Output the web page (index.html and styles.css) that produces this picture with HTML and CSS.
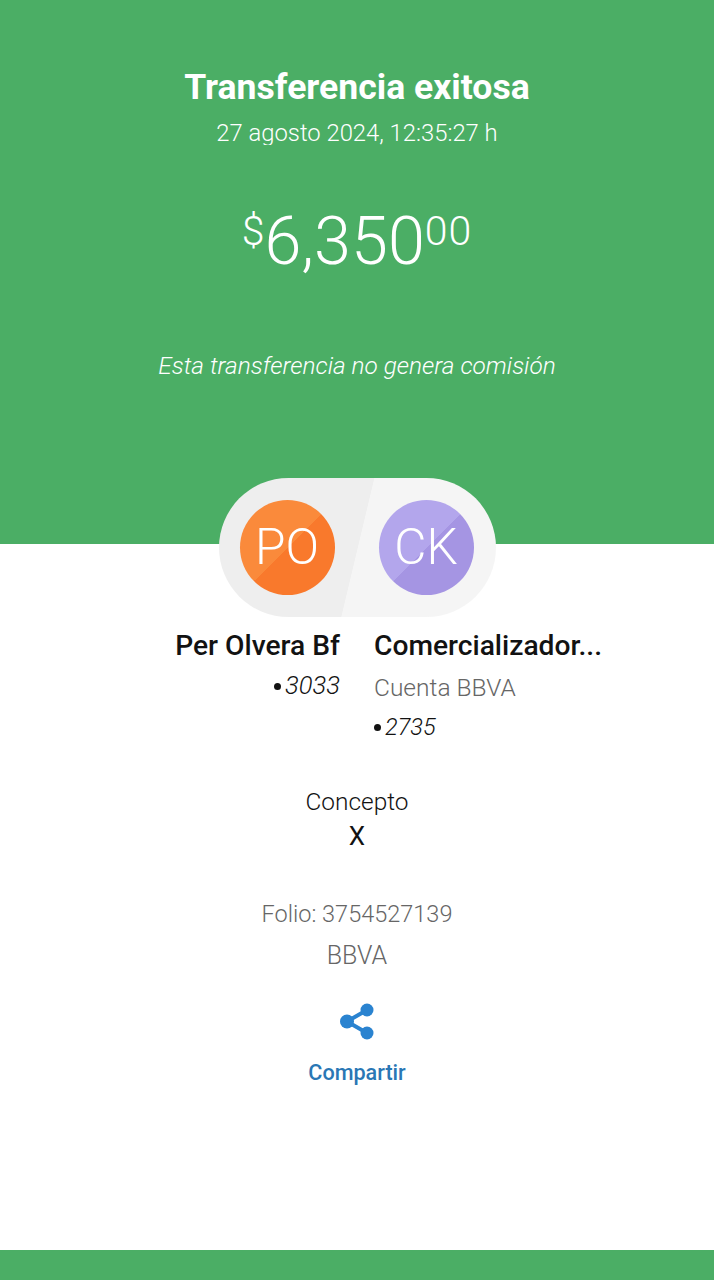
FILE: index.html
```html
<!DOCTYPE html>
<html lang="es">

    <head>
        <meta charset="UTF-8">
        <meta name="viewport" content="width=device-width, initial-scale=1.0">
        <title>Transferencia exitosa</title>

        <link rel="stylesheet" href="styles.css">
    </head>

    <body>
        <header class="hero">
            <h1 class="hero-title">Transferencia exitosa</h1>
            <p class="hero-date">27 agosto 2024, 12:35:27 h</p>
            <p class="amount"><span class="amount-sup">$</span>6,350<span class="amount-sup amount-cents">00</span></p>
            <p class="hero-note">Esta transferencia no genera comisión</p>
        </header>

        <main class="detail">
            <div class="pill">
                <div class="avatar avatar-orange">PO</div>
                <div class="avatar avatar-purple">CK</div>
            </div>

            <div class="parties">
                <div class="party party-from">
                    <div class="party-name">Per Olvera Bf</div>
                    <div class="party-account party-account-wide"><span class="dot"></span>3033</div>
                </div>
                <div class="party party-to">
                    <div class="party-name">Comercializador...</div>
                    <div class="party-bank">Cuenta BBVA</div>
                    <div class="party-account"><span class="dot"></span>2735</div>
                </div>
            </div>

            <div class="concept">
                <div class="concept-label">Concepto</div>
                <div class="concept-value">X</div>
            </div>

            <div class="folio">
                <div>Folio: 3754527139</div>
                <div class="folio-bank">BBVA</div>
            </div>

            <a class="share" href="#">
                <svg class="share-icon" width="36" height="38" viewBox="0 0 36 38">
                    <path d="M28 7 L8 18.5 L28 30" fill="none" stroke="#2a83d0" stroke-width="4" />
                    <circle cx="28" cy="7" r="6.5" fill="#2a83d0" />
                    <circle cx="8" cy="18.5" r="7" fill="#2a83d0" />
                    <circle cx="28" cy="30" r="6.5" fill="#2a83d0" />
                </svg>
                <span class="share-label">Compartir</span>
            </a>
        </main>

        <footer class="bottom-bar"></footer>
    </body>

</html>
```

FILE: styles.css
```css
* {
    box-sizing: border-box;
}

body {
    margin: 0;
    height: 1280px;
    display: flex;
    flex-direction: column;
    font-family: Roboto, "Liberation Sans", sans-serif;
    background-color: #fff;
    overflow: hidden;
}

p,
h1 {
    margin: 0;
}

.hero {
    height: 544px;
    flex: none;
    padding-top: 67px;
    background-color: #4bae65;
    color: #fff;
    text-align: center;
}

.hero-title {
    font-size: 35.6px;
    line-height: 40px;
    font-weight: 700;
}

/* the row is shorter than the text, descenders get cut */
.hero-date {
    margin-top: 11px;
    height: 27px;
    overflow: hidden;
    font-size: 23.8px;
    line-height: 30px;
    font-weight: 300;
}

.amount {
    margin-top: 56px;
    font-size: 66.5px;
    line-height: 80px;
    font-weight: 300;
}

.amount-sup {
    font-size: 41px;
    line-height: 0;
    vertical-align: 19px;
}

.amount-cents {
    letter-spacing: 1px;
}

.hero-note {
    margin-top: 70px;
    font-size: 24.4px;
    line-height: 30px;
    font-weight: 300;
    font-style: italic;
}

.detail {
    flex: 1;
    display: flex;
    flex-direction: column;
    align-items: center;
}

/* sits half over the green header */
.pill {
    width: 277px;
    height: 139px;
    margin-top: -66px;
    padding: 0 22px 0 21px;
    display: flex;
    align-items: center;
    justify-content: space-between;
    border-radius: 70px;
    background: linear-gradient(103.4deg, #eeeeee 50%, #f5f5f5 50.2%);
}

.avatar {
    width: 95px;
    height: 95px;
    padding-bottom: 2px;
    border-radius: 50%;
    display: flex;
    align-items: center;
    justify-content: center;
    color: #fff;
    font-size: 49.5px;
    font-weight: 300;
}

.avatar-orange {
    background: linear-gradient(135deg, #fa8a3b 50%, #f9792c 50%);
}

.avatar-purple {
    background: linear-gradient(135deg, #b3a6ec 50%, #a595e3 50%);
}

.parties {
    width: 100%;
    margin-top: 12px;
    display: flex;
    gap: 34px;
}

.party {
    flex: none;
}

.party-from {
    width: 340px;
    text-align: right;
}

.party-name {
    font-size: 28.2px;
    line-height: 33px;
    font-weight: 500;
    color: #121212;
}

.party-bank {
    margin-top: 9px;
    font-size: 24.5px;
    line-height: 34px;
    font-weight: 300;
    color: #666;
}

.party-account {
    margin-top: 6px;
    font-size: 23.5px;
    line-height: 34px;
    font-weight: 300;
    font-style: italic;
    color: #121212;
}

.party-account-wide {
    font-size: 25.5px;
}

.party-to .party-account {
    margin-top: 5px;
}

.dot {
    display: inline-block;
    width: 7px;
    height: 7px;
    margin-right: 4px;
    border-radius: 50%;
    background-color: #121212;
    vertical-align: 4px;
}

.concept {
    margin-top: 41px;
    text-align: center;
    color: #121212;
}

.concept-label {
    font-size: 24.4px;
    line-height: 34px;
    font-weight: 300;
}

.concept-value {
    font-size: 26px;
    line-height: 34px;
}

.folio {
    margin-top: 44px;
    display: flex;
    flex-direction: column;
    gap: 8px;
    text-align: center;
    font-size: 23.5px;
    line-height: 34px;
    font-weight: 300;
    color: #666;
}

.folio-bank {
    font-size: 25px;
}

.share {
    margin-top: 30px;
    display: flex;
    flex-direction: column;
    align-items: center;
    text-decoration: none;
}

.share-label {
    margin-top: 18px;
    font-size: 21.6px;
    line-height: 28px;
    font-weight: 500;
    color: #2a77b5;
}

.bottom-bar {
    height: 30px;
    flex: none;
    background-color: #4bae65;
}
```
